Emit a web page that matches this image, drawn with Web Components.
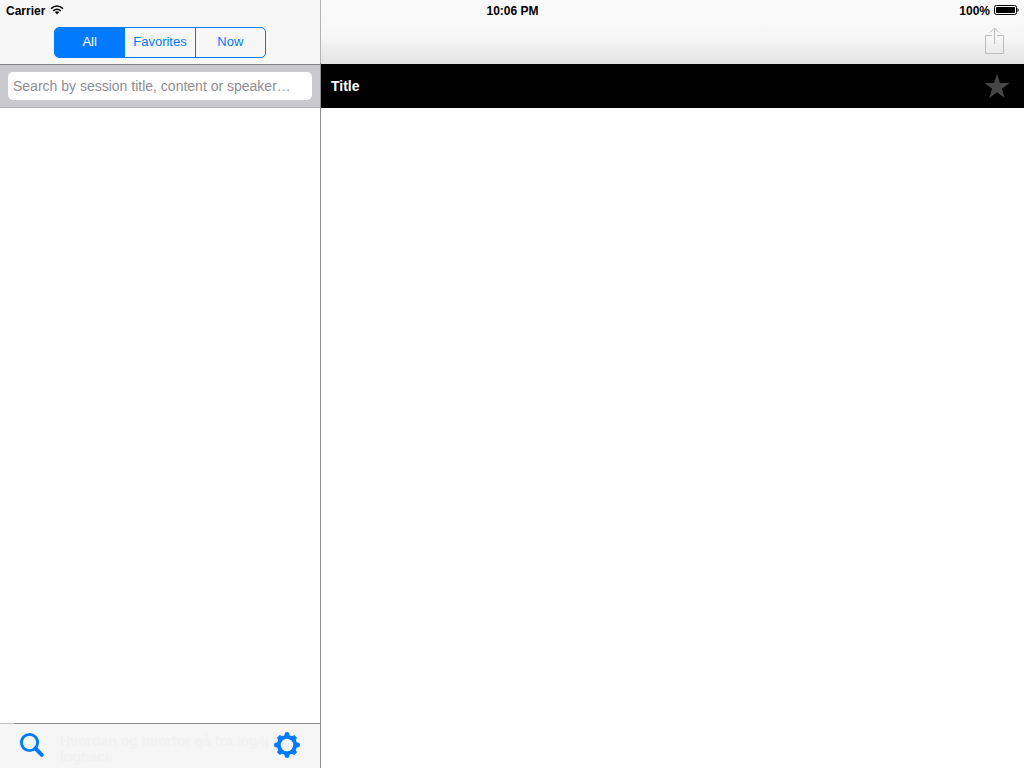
<!DOCTYPE html>
<html lang="en">
<head>
<meta charset="utf-8">
<meta name="viewport" content="width=device-width, initial-scale=1">
<title>Sessions</title>
<style>
html, body { height: 100%; margin: 0; }
body { font-family: "Liberation Sans", Arial, sans-serif; background: #fff; color: #000; }
</style>
</head>
<body>
<session-app></session-app>
<script>
const define = (name, html, setup) => customElements.define(name, class extends HTMLElement {
  constructor() {
    super();
    const template = document.createElement('template');
    template.innerHTML = html;
    this.attachShadow({ mode: 'open' }).append(template.content.cloneNode(true));
    if (setup) setup(this.shadowRoot);
  }
});

define('status-bar', `
<style>
:host { display: grid; grid-template-columns: 1fr auto 1fr; align-items: center; height: 22px; padding: 0 5px 0 6px; box-sizing: border-box; font-size: 12px; font-weight: bold; line-height: 16px; }
div { display: flex; align-items: center; gap: 5px; }
.right { justify-content: flex-end; gap: 4px; }
svg { display: block; margin-bottom: 2px; }
</style>
<div><span>Carrier</span>
<svg width="14" height="10" viewBox="0 0 14 10" aria-hidden="true"><g fill="none" stroke="#000" stroke-width="1.6"><path d="M1 3.7Q7-1.7 13 3.7"/><path d="M3.2 5.9Q7 2.6 10.8 5.9"/></g><path d="M4.8 7.1Q7 5.4 9.2 7.1L7 9.5Z"/></svg></div>
<time>10:06 PM</time>
<div class="right"><span>100%</span>
<svg width="25" height="10" viewBox="0 0 25 10" aria-hidden="true"><rect x=".5" y=".5" width="22" height="9" rx="1.8" fill="none" stroke="#000"/><rect x="2" y="2" width="19" height="6" rx=".8"/><path d="M23.5 3q1.2.5 1.2 2t-1.2 2z"/></svg></div>`);

define('segmented-control', `
<style>
:host { display: block; width: 212px; }
div { display: flex; height: 31px; box-sizing: border-box; border: 1px solid #007aff; border-radius: 5px; overflow: hidden; }
button { flex: 1; margin: 0; padding: 0 0 2px; border: 0; border-left: 1px solid #007aff; background: none; color: #007aff; font: 13px/16px "Liberation Sans", Arial, sans-serif; }
button:first-child { border-left: 0; }
button[aria-pressed=true] { background: #007aff; color: #fff; }
</style>
<div role="group" aria-label="Filter sessions">
<button type="button" aria-pressed="true">All</button><button type="button" aria-pressed="false">Favorites</button><button type="button" aria-pressed="false">Now</button>
</div>`, root => {
  const buttons = [...root.querySelectorAll('button')];
  buttons.forEach(b => b.addEventListener('click', () =>
    buttons.forEach(o => o.setAttribute('aria-pressed', String(o === b)))));
});

define('search-bar', `
<style>
:host { display: block; box-sizing: border-box; height: 43px; padding: 7px 8px; background: #c9c9ce; border-bottom: 1px solid #b2b2b6; }
input { display: block; width: 100%; height: 28px; box-sizing: border-box; margin: 0; padding: 0 5px; border: 0; border-radius: 5px; background: #fff; font: 14px/20px "Liberation Sans", Arial, sans-serif; text-overflow: ellipsis; }
input::placeholder { color: #8e8e93; opacity: 1; }
</style>
<input type="text" aria-label="Search sessions" placeholder="Search by session title, content or speaker…">`);

define('icon-button', `
<style>
:host { display: block; }
button { display: block; margin: 0; padding: 0; border: 0; background: none; color: inherit; }
::slotted(svg) { display: block; }
</style>
<button type="button"><slot></slot></button>`, root => {
  const label = root.host.getAttribute('label');
  if (label) root.querySelector('button').setAttribute('aria-label', label);
});

define('bottom-bar', `
<style>
:host { display: grid; grid-template-columns: 60px 1fr 46px; align-items: center; height: 45px; box-sizing: border-box; padding-bottom: 2px; border-top: 1px solid; border-image: linear-gradient(to right, #c4c4c6 15px, #8e8e92 15px) 1; background: #f6f6f6; color: #007aff; }
p { grid-area: 1 / 2 / 2 / 4; margin: 0; padding-top: 8px; font-size: 14px; line-height: 16px; font-weight: bold; color: #f2f2f2; }
icon-button { grid-row: 1; }
.find { grid-column: 1; justify-self: center; margin-left: 4px; }
.set { grid-column: 3; }
</style>
<p>Hvordan og hvorfor gå fra log4j til<br>logback</p>
<icon-button class="find" label="Search"><svg width="26" height="26" viewBox="0 0 26 26"><circle cx="10.5" cy="10.5" r="8.1" fill="none" stroke="currentColor" stroke-width="2.9"/><path d="M16.5 16.5 22.8 22.8" stroke="currentColor" stroke-width="4" stroke-linecap="round"/></svg></icon-button>
<icon-button class="set" label="Settings"><svg width="26" height="26" viewBox="0 0 26 26"><circle cx="13" cy="13" r="8.2" fill="none" stroke="currentColor" stroke-width="3.8"/><g fill="currentColor"><path d="M10 4.5 11 .7Q13-.6 15 .7L16 4.5Z"/><path d="M10 4.5 11 .7Q13-.6 15 .7L16 4.5Z" transform="rotate(90 13 13)"/><path d="M10 4.5 11 .7Q13-.6 15 .7L16 4.5Z" transform="rotate(180 13 13)"/><path d="M10 4.5 11 .7Q13-.6 15 .7L16 4.5Z" transform="rotate(270 13 13)"/><path d="M10 4.5 11 .8h4L16 4.5Z" transform="rotate(45 13 13)"/><path d="M10 4.5 11 .8h4L16 4.5Z" transform="rotate(135 13 13)"/><path d="M10 4.5 11 .8h4L16 4.5Z" transform="rotate(225 13 13)"/><path d="M10 4.5 11 .8h4L16 4.5Z" transform="rotate(315 13 13)"/></g></svg></icon-button>`);

define('session-list', `
<style>
:host { display: flex; flex-direction: column; min-height: 100%; box-sizing: border-box; border-right: 1px solid; border-image: linear-gradient(#b4b4b6 64px, #8e8e92 64px) 1; }
header { display: flex; justify-content: center; align-items: flex-end; height: 65px; box-sizing: border-box; padding-bottom: 6px; background: #f7f7f7; border-bottom: 1px solid #858588; }
main { flex: 1; }
</style>
<header><segmented-control></segmented-control></header>
<search-bar></search-bar>
<main></main>
<bottom-bar></bottom-bar>`);

define('session-detail', `
<style>
:host { display: block; min-width: 0; }
header { display: flex; justify-content: flex-end; align-items: flex-end; height: 64px; box-sizing: border-box; padding: 0 20px 9px; background: linear-gradient(#f9f9f9 20px, #f5f5f5 40px, #e2e2e2); color: #bcbcbc; }
section { display: flex; justify-content: space-between; align-items: center; height: 44px; padding: 0 14px 0 10px; background: #000; color: #464646; }
h1 { margin: 0; font-size: 14px; line-height: 20px; color: #fff; }
</style>
<header><icon-button label="Share"><svg width="19" height="28" viewBox="0 0 19 28" fill="none" stroke="currentColor"><path d="M7 8.5H.5v18h18v-18H12M9.5 17V1M5 5.5l4.5-4.5L14 5.5"/></svg></icon-button></header>
<section><h1>Title</h1><icon-button label="Favorite"><svg width="26" height="26" viewBox="0 0 26 26"><path fill="currentColor" d="M13 .8 16 10h9.6l-7.7 5.8 2.8 9.1L13 19.3l-7.7 5.6 2.8-9.1L.4 10H10z"/></svg></icon-button></section>`);

define('session-app', `
<style>
:host { display: grid; grid-template-columns: 321px 1fr; min-height: 100%; height: 100%; position: relative; }
status-bar { position: absolute; top: 0; left: 0; right: 0; }
</style>
<session-list></session-list>
<session-detail></session-detail>
<status-bar></status-bar>`);
</script>
</body>
</html>
